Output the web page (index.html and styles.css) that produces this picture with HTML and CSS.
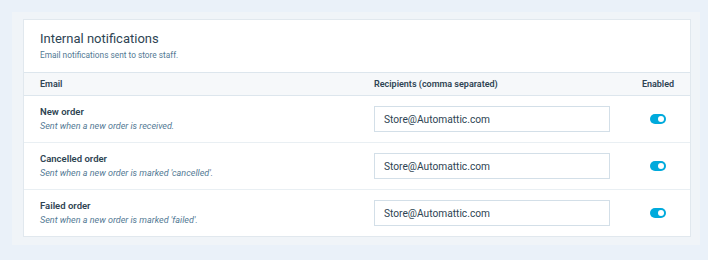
FILE: index.html
```html
<!DOCTYPE html>
<html lang="en">
<head>
    <meta charset="UTF-8">
    <title>Internal notifications</title>
    <link rel="stylesheet" href="styles.css">
</head>
<body>
    <div class="panel">
        <div class="card">
            <div class="card-header">
                <h2>Internal notifications</h2>
                <p>Email notifications sent to store staff.</p>
            </div>
            <div class="table">
                <div class="row table-head">
                    <div>Email</div>
                    <div>Recipients (comma separated)</div>
                    <div class="col-enabled">Enabled</div>
                </div>
                <div class="row">
                    <div>
                        <div class="row-title">New order</div>
                        <div class="row-desc">Sent when a new order is received.</div>
                    </div>
                    <input type="text" class="recipients" value="Store@Automattic.com">
                    <div class="col-enabled"><span class="toggle"></span></div>
                </div>
                <div class="row">
                    <div>
                        <div class="row-title">Cancelled order</div>
                        <div class="row-desc">Sent when a new order is marked 'cancelled'.</div>
                    </div>
                    <input type="text" class="recipients" value="Store@Automattic.com">
                    <div class="col-enabled"><span class="toggle"></span></div>
                </div>
                <div class="row">
                    <div>
                        <div class="row-title">Failed order</div>
                        <div class="row-desc">Sent when a new order is marked 'failed'.</div>
                    </div>
                    <input type="text" class="recipients" value="Store@Automattic.com">
                    <div class="col-enabled"><span class="toggle"></span></div>
                </div>
            </div>
        </div>
    </div>
</body>
</html>
```

FILE: styles.css
```css
body {
    font-family: Roboto, "Liberation Sans", sans-serif;
    background-color: #eaf1f9;
    color: #2e4453;
    margin: 0;
    padding: 12px 8px 0 12px;
}
.panel {
    background-color: #f0f4f8;
    padding: 7px 9px 8px 11px;
}
.card {
    background-color: #fff;
    border: 1px solid #e1e8ee;
}
.card-header {
    padding: 11px 16px 12px;
    border-bottom: 1px solid #dde6ed;
}
.card-header h2 {
    font-size: 13px;
    line-height: 15px;
    font-weight: 400;
    margin: 0;
}
.card-header p {
    font-size: 8.3px;
    line-height: 10px;
    color: #537994;
    margin: 4px 0 0;
}
.row {
    display: grid;
    grid-template-columns: 1fr 236px 32px;
    column-gap: 32px;
    align-items: center;
    padding: 0 16px;
    height: 46px;
    border-bottom: 1px solid #e9eff3;
}
.row:last-child {
    border-bottom: none;
}
.table-head {
    height: 22px;
    background-color: #f6f8fa;
    border-bottom: 1px solid #dde6ed;
    font-size: 9px;
    font-weight: 600;
}
.col-enabled {
    display: flex;
    justify-content: center;
    white-space: nowrap;
}
.row-title {
    font-size: 9.5px;
    line-height: 12.5px;
    font-weight: 600;
}
.row-desc {
    font-size: 9px;
    line-height: 12px;
    font-style: italic;
    color: #537994;
    margin-top: 1px;
}
.recipients {
    box-sizing: border-box;
    width: 100%;
    height: 26px;
    border: 1px solid #d3dfe8;
    padding: 0 9px;
    font-family: inherit;
    font-size: 10.2px;
    color: #2e4453;
    outline: none;
}
.toggle {
    display: block;
    position: relative;
    width: 16px;
    height: 10px;
    border-radius: 5px;
    background-color: #00aadc;
}
.toggle::after {
    content: "";
    position: absolute;
    top: 2px;
    right: 2px;
    width: 6px;
    height: 6px;
    border-radius: 50%;
    background-color: #fff;
}
```
